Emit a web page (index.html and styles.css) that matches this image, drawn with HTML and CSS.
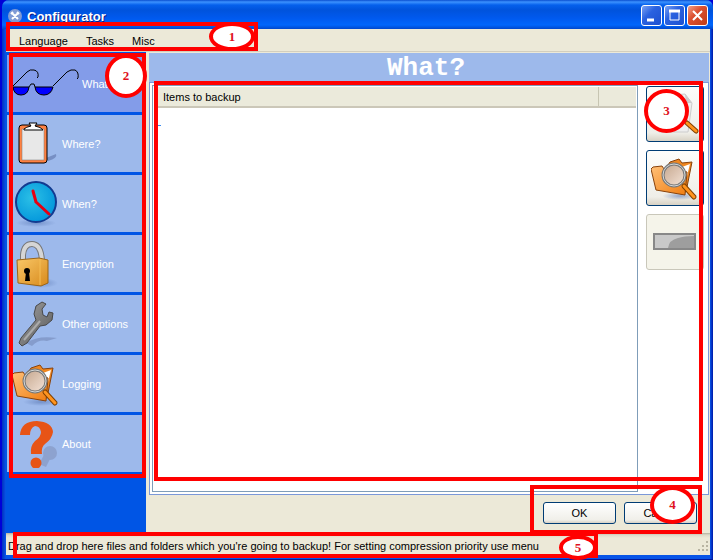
FILE: index.html
```html
<!DOCTYPE html>
<html lang="en">
<head>
<meta charset="utf-8">
<title>Configurator</title>
<link rel="stylesheet" href="styles.css">
</head>
<body>
<svg class="defs" aria-hidden="true">
  <defs>
    <linearGradient id="orange" x1="0" y1="0" x2="1" y2="1"><stop offset="0" stop-color="#ffc078"/><stop offset="1" stop-color="#f07d10"/></linearGradient>
    <linearGradient id="gold" x1="0" y1="0" x2="1" y2="1"><stop offset="0" stop-color="#f9c868"/><stop offset="1" stop-color="#d88a1c"/></linearGradient>
    <linearGradient id="steel" x1="0" y1="0" x2="1" y2="1"><stop offset="0" stop-color="#a4a4a4"/><stop offset="1" stop-color="#555"/></linearGradient>
    <linearGradient id="lens" x1="0" y1="0" x2="1" y2="1"><stop offset="0" stop-color="#c4a58c"/><stop offset="1" stop-color="#f5e4d8"/></linearGradient>
    <radialGradient id="clock" cx=".4" cy=".4" r=".6"><stop offset="0" stop-color="#2cc0e6"/><stop offset="1" stop-color="#0599dc"/></radialGradient>
    <radialGradient id="shade"><stop offset="0" stop-color="#5a78b4" stop-opacity=".6"/><stop offset="1" stop-color="#5a78b4" stop-opacity="0"/></radialGradient>
    <symbol id="folder" viewBox="0 0 48 48">
      <ellipse cx="29" cy="42" rx="18" ry="4" fill="url(#shade)"/>
      <path d="M17 11 19 8 28 5 31 9 41 8 35 38 12 33Z" fill="#ef8720" stroke="#88420c"/>
      <path d="M31 13 39 10 34 30 29 28Z" fill="#fff"/>
      <path d="M0 15 2 13 11 12 13 15 29 16 36 18 34 41 5 36Z" fill="url(#orange)" stroke="#88420c"/>
      <path d="M33 32 43 43" stroke="#804000" stroke-width="5" stroke-linecap="round"/>
      <path d="M33 32 43 43" stroke="#ff941e" stroke-width="3" stroke-linecap="round"/>
      <circle cx="23" cy="21" r="11" fill="url(#lens)" stroke="#777" stroke-width="3"/>
      <circle cx="23" cy="21" r="11" fill="none" stroke="#d4d7d7"/>
    </symbol>
  </defs>
</svg>

<div class="window">
  <header class="titlebar">
    <svg class="app-icon" viewBox="0 0 14 14"><circle cx="7" cy="7" r="7" fill="#7f9bd6"/><path d="M4 4l6 6M10 4l-6 6M3 5l2-2M9 3l2 2" stroke="#fff" stroke-width="2"/></svg>
    <h1>Configurator</h1>
    <div class="caption-buttons">
      <button aria-label="Minimize"><svg viewBox="0 0 17 17"><path d="M4 13h7" stroke="#fff" stroke-width="3"/></svg></button>
      <button aria-label="Maximize"><svg viewBox="0 0 17 17"><path d="M4 4v9h9V4" fill="none" stroke="#fff"/><path d="M3 4h11" stroke="#fff" stroke-width="3"/></svg></button>
      <button class="close" aria-label="Close"><svg viewBox="0 0 17 17"><path d="M4 4l9 9M13 4l-9 9" stroke="#fff" stroke-width="2"/></svg></button>
    </div>
  </header>
  <nav class="menubar"><button>Language</button><button>Tasks</button><button>Misc</button></nav>

  <div class="body">
    <nav class="sidebar">
      <button class="item active">
        <svg class="glasses" viewBox="0 0 68 48"><path d="M1 27Q2 35 9 35 16 35 17 27ZM23 27Q24 35 32 35 39 35 41 27Z" fill="#00f"/><path d="M1 27H17M23 27H41M1 27Q2 35 9 35 16 35 17 27L19 24H22L23 27Q24 35 32 35 39 35 41 27M1 26 15 12Q18 9 22 10 27 11 26 17L25 18M41 26 55 12Q59 9 63 10 67 12 66 18L65 19" fill="none" stroke="#000"/></svg>
        <span>What?</span></button>
      <button class="item">
        <svg viewBox="0 0 48 48"><path d="M34 38 44 34Q46 38 36 41Z" fill="#778fc4"/><rect x="7" y="5" width="28" height="38" rx="3" fill="#ff8142" stroke="#000"/><path d="M10 9H32V40H10Z" fill="#e8e8e8" stroke="#777" stroke-width=".5"/><path d="M12 9Q14 7 19 6L17 3H25L23 6Q29 7 31 10H12Z" fill="#fff" stroke="#000"/></svg>
        <span>Where?</span></button>
      <button class="item">
        <svg viewBox="0 0 48 48"><ellipse cx="24" cy="43" rx="20" ry="4" fill="url(#shade)"/><circle cx="24" cy="22" r="20" fill="url(#clock)" stroke="#123b91" stroke-width="2"/><path d="M21 11 24 22 37 34" fill="none" stroke="#e60012" stroke-width="3" stroke-linecap="round" stroke-linejoin="round"/></svg>
        <span>When?</span></button>
      <button class="item">
        <svg viewBox="0 0 48 48"><ellipse cx="30" cy="43" rx="16" ry="5" fill="url(#shade)"/><path d="M11 21V15Q12 4 20 4 29 4 30 21" fill="none" stroke="#777" stroke-width="6"/><path d="M11 21V15Q12 4 20 4 29 4 30 21" fill="none" stroke="#d5d5d5" stroke-width="4"/><path d="M5 20 27 18 36 20V43L29 46 6 43Z" fill="url(#gold)" stroke="#9b6415"/><path d="M28 19V45" stroke="#f5bd55"/><circle cx="15" cy="31" r="3"/><path d="M14 32h3l1 9h-5Z"/></svg>
        <span>Encryption</span></button>
      <button class="item">
        <svg viewBox="0 0 48 48"><path d="M14 43Q26 35 45 38L35 41Q27 39 20 46Z" fill="#7488b8" opacity=".6"/><path d="M22 14 24 6 30 2 34 4 30 9 31 15 35 17 37 12 41 13 40 20 34 25 28 26 15 43 10 46 7 43 9 38 24 20Z" fill="url(#steel)" stroke="#484848" stroke-linejoin="round"/><path d="M12 40 28 21" stroke="#aaa" stroke-width="2"/></svg>
        <span>Other options</span></button>
      <button class="item"><svg viewBox="0 0 48 48"><use href="#folder"/></svg><span>Logging</span></button>
      <button class="item">
        <svg viewBox="0 0 48 48"><g fill="#8da2cf"><circle cx="38" cy="33" r="7"/><path d="M32 35l6 4-4 8-7-3Z"/></g><path d="M8 15Q9 1 25 1 40 2 41 12 40 19 33 24 29 27 30 34H19Q18 26 23 21 29 17 29 12 28 6 23 6 18 8 18 15Z" fill="#e75416"/><circle cx="24" cy="43" r="5.5" fill="#e75416"/></svg>
        <span>About</span></button>
    </nav>

    <main class="main">
      <h2>What?</h2>
      <section class="panel">
        <div class="list">
          <table><thead><tr><th>Items to backup</th><th class="extra"></th></tr></thead><tbody><tr><td colspan="2"><i class="caret"></i></td></tr></tbody></table>
        </div>
        <div class="tools">
          <button aria-label="Add file"><svg viewBox="0 0 48 48"><path d="M8 42 10 6 34 4 41 13 37 42Z" fill="#eee" stroke="#ccc"/><path d="M34 4 35 13 41 13Z" fill="#ccc"/><path d="M36 33 45 41" stroke="#804000" stroke-width="5" stroke-linecap="round"/><path d="M36 33 45 41" stroke="#ff941e" stroke-width="3" stroke-linecap="round"/><circle cx="23" cy="21" r="11" fill="#eee" stroke="#777" stroke-width="3"/></svg></button>
          <button aria-label="Add folder"><svg viewBox="0 0 48 48"><use href="#folder"/></svg></button>
          <button aria-label="Remove" disabled><svg viewBox="0 0 48 48"><rect x="3" y="16" width="41" height="15" fill="#c9c9c9" stroke="#888" stroke-width="2"/><path d="M17 30Q18 22 27 20 33 18 43 18V30Z" fill="#9e9e9e"/></svg></button>
        </div>
      </section>
      <div class="actions"><button>OK</button><button>Cancel</button></div>
    </main>
  </div>
  <footer class="status">
    <span>Drag and drop here files and folders which you're going to backup! For setting compression priority use menu</span>
    <svg viewBox="0 0 12 12"><path d="M9 1h2v2H9zM5 5h2v2H5zM9 5h2v2H9zM1 9h2v2H1zM5 9h2v2H5zM9 9h2v2H9z" fill="#b8b4a2"/></svg>
  </footer>
</div>

<div class="frame frame-1"></div><div class="frame frame-2"></div><div class="frame frame-3"></div><div class="frame frame-4"></div><div class="frame frame-5"></div>
<div class="mark mark-1">1</div><div class="mark mark-2">2</div><div class="mark mark-3">3</div><div class="mark mark-4">4</div><div class="mark mark-5">5</div>
</body>
</html>
```
FILE: styles.css
```css
* { box-sizing: border-box; }
body {
  margin: 0;
  position: relative;
  height: 100vh;
  overflow: hidden;
  padding-left: 2px;
  background: #0000d8;
  font: 11px/14px "Liberation Sans", Arial, sans-serif;
  color: #000;
}
button { font: inherit; color: inherit; margin: 0; padding: 0; border: 0; background: none; }
svg { display: block; flex: none; }
.defs { position: absolute; width: 0; height: 0; }

.window {
  height: 100%;
  display: flex;
  flex-direction: column;
  padding: 0 3px 4px 4px;
  background: linear-gradient(90deg, #0030c0, #0855e8 4px, #0855e8 calc(100% - 3px), #0018a8);
  border-bottom: 1px solid #00189c;
  border-radius: 7px 7px 0 0;
}
.titlebar {
  height: 29px;
  flex: none;
  display: flex;
  align-items: center;
  gap: 5px;
  margin: 0 -3px 0 -4px;
  padding: 2px 5px 0 6px;
  border-radius: 7px 7px 0 0;
  background: linear-gradient(#0a4fd0, #3c92ff 2px, #0560ec 5px, #0053dc 10px, #0059ee 18px, #0066fc 25px, #0047cc);
}
.app-icon { width: 14px; height: 14px; }
.titlebar h1 { flex: 1; margin: 0; padding-top: 2px; font-size: 13px; line-height: 16px; color: #fff; text-shadow: 1px 1px #0a1883; }
.caption-buttons { display: flex; gap: 2px; }
.caption-buttons button {
  width: 21px;
  height: 21px;
  padding: 1px;
  border: 1px solid #fff;
  border-radius: 3px;
  background: linear-gradient(135deg, #7ba2f4, #2a62e0 40%, #1d50d0);
}
.caption-buttons .close { background: linear-gradient(135deg, #f0a088, #dc5030 40%, #c03c18); }
.caption-buttons svg { width: 17px; height: 17px; }

.menubar { height: 23px; flex: none; display: flex; gap: 18px; padding: 1px 13px 0; background: #ece9d8; border-bottom: 1px solid #d2cebe; }

.body { flex: 1; min-height: 0; display: flex; background: #ece9d8; }
.sidebar { width: 140px; flex: none; display: flex; flex-direction: column; gap: 3px; padding: 3px 1px; background: #0055e5; }
.item { height: 57px; flex: none; display: flex; align-items: center; gap: 2px; padding-left: 5px; background: #9db9eb; color: #fff; text-align: left; }
.item.active { background: #839ce9; }
.item svg { width: 48px; height: 48px; }
.item .glasses { width: 68px; }

.main { flex: 1; min-width: 0; display: flex; flex-direction: column; padding: 1px 1px 0 3px; }
.main h2 { margin: 0; padding-right: 6px; height: 29px; flex: none; background: #9db9eb; color: #fff; font: bold 26px/30px "Liberation Mono", "Courier New", monospace; text-align: center; }
.panel { flex: 1; min-height: 0; display: flex; gap: 6px; padding: 2px; background: #fff; border: 1px solid #7b98d8; }
.list { flex: 1; min-width: 0; padding: 1px; border: 1px solid #7f9db9; }
.list table { width: 100%; border-collapse: collapse; }
.list th { height: 20px; padding: 0 9px; font-weight: normal; text-align: left; background: #ebeadb; border-bottom: 2px solid #cbc7b8; }
.list .extra { width: 38px; padding: 0; border-left: 1px solid #c7c5b2; }
.list td { padding: 17px 3px 0; }
.caret { display: block; width: 4px; height: 1px; background: #3c8cf0; }
.tools { display: flex; flex-direction: column; gap: 8px; padding: 1px 2px; }
.tools button { width: 58px; height: 56px; padding: 3px 4px; border: 1px solid #003c74; border-radius: 3px; background: linear-gradient(#fdfdfb, #efeee8 85%, #d8d2c4); }
.tools button:disabled { border-color: #c9c7ba; background: #f5f4ea; }
.tools svg { width: 48px; height: 48px; }

.actions { display: flex; flex: none; justify-content: flex-end; gap: 8px; padding: 7px 12px 9px 0; }
.actions button { width: 73px; height: 22px; font-size: 11px; border: 1px solid #003c74; border-radius: 3px; background: linear-gradient(#fff, #f0efe9 85%, #d6d0c5); }

.status { height: 22px; flex: none; display: flex; align-items: center; justify-content: space-between; padding: 3px 1px 0 2px; background: linear-gradient(#b4b09e, #dedac9 2px, #ece9d8 5px); white-space: nowrap; }
.status svg { width: 12px; height: 12px; }

/* Numbered call-outs laid over the window */
.frame, .mark { position: absolute; border: 4px solid #f00; }
.frame { pointer-events: none; }
.frame-1 { left: 6px; top: 22px; width: 252px; height: 29px; }
.frame-2 { left: 9px; top: 53px; width: 137px; height: 425px; }
.frame-3 { left: 154px; right: 10px; top: 81px; bottom: 79px; }
.frame-4 { right: 11px; bottom: 26px; width: 172px; height: 49px; }
.frame-5 { left: 13px; bottom: 2px; width: 585px; height: 26px; }
.mark {
  display: flex;
  align-items: center;
  justify-content: center;
  border-radius: 50%;
  background: #fff;
  color: #e01020;
  font: bold 13px/16px "Liberation Serif", "Times New Roman", serif;
}
.mark-1 { left: 209px; top: 22px; width: 46px; height: 29px; }
.mark-2 { left: 105px; top: 54px; width: 42px; height: 44px; }
.mark-3 { right: 24px; top: 89px; width: 45px; height: 44px; }
.mark-4 { right: 18px; bottom: 36px; width: 45px; height: 38px; }
.mark-5 { left: 559px; bottom: 0; width: 38px; height: 25px; }
```
